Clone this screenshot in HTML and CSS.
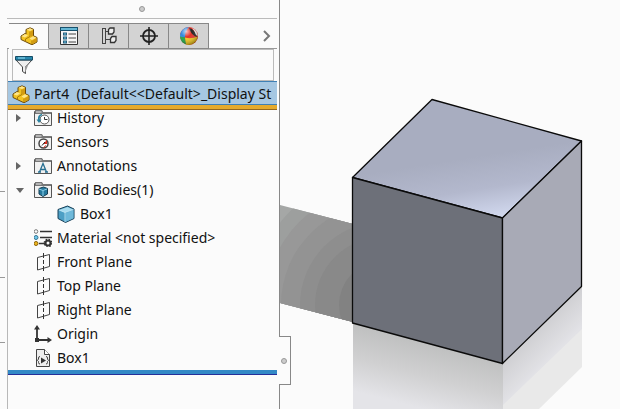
FILE: index.html
```html
<!DOCTYPE html>
<html lang="en">
<head>
<meta charset="utf-8">
<title>Part4</title>
<link rel="stylesheet" href="styles.css">
</head>
<body>
<svg class="defs" aria-hidden="true">
  <symbol id="part" viewBox="0 0 18 18">
    <path d="M1 9 5 6.500 6 7V2.500L10 .8l3.500 1.500v6.500L17 10.500v4.500l-5 2.800L1 12.500z" fill="#f3c321" stroke="#6b4a0c"/>
    <path d="M6.500 2.800 10 1.300l3 1.300-3 1.500zM1.500 9.200 5 7l3 1.500-3 2zM12 13l-2.500-1.500 3.500-2.200 3.500 1.500z" fill="#ffe58a"/>
    <path d="M10 4.500v5l-4.500 2.500v2.500M12 13.500v4" fill="none" stroke="#a97908"/>
    <path d="M12.500 13.500 16.500 11v3.800l-4 2.300zM10.500 4.500 13 3.300v5.500l-2.500 1.500z" fill="#d39b12"/>
  </symbol>
  <symbol id="folder" viewBox="0 0 18 18">
    <path d="M.5 16.500V2.500L1.500 1.500h6l1 2h9v13z" fill="#f1f1f1" stroke="#555"/>
    <path d="M1 5h16V3H9L8 1H2L1 2z" fill="#777"/>
    <path d="M2 3h5.500" stroke="#eee"/>
  </symbol>
  <symbol id="cube" viewBox="0 0 18 18">
    <path d="M1 4.500 10.500 1 17 4v9.500L8.500 17.500 1 13.500z" fill="#4d9fc5" stroke="#173f57"/>
    <path d="M2 5l8.500-3L16 4.500 8 7.500z" fill="#a8dcf0"/>
    <path d="M8.500 8 16.500 5v8.200l-8 3.700z" fill="#6fb9da"/>
    <path d="M8 7.500V17M2 5l6 2.500 8.500-3" fill="none" stroke="#d3f0fb" stroke-width=".7"/>
  </symbol>
  <symbol id="plane" viewBox="0 0 18 18">
    <path d="M3.500 4.500 15.500 1.500v12l-12 3.500z" fill="none" stroke="#444"/>
    <path d="M9.500 0v18" stroke="#333" stroke-dasharray="5 2 4 2"/>
  </symbol>
</svg>
<div class="app">
  <div class="gutter" aria-hidden="true"><i></i><i></i><i></i></div>
  <aside class="panel">
    <div class="grip"><span class="dot"></span></div>
    <div class="tabs" role="tablist">
      <button class="tab active" role="tab" aria-selected="true" aria-label="Design tree"><svg class="icon"><use href="#part"/></svg></button>
      <button class="tab" role="tab" aria-label="Properties">
        <svg class="icon" viewBox="0 0 18 18"><path d="M.5.500h17v17H.5z" fill="#f7f7f7" stroke="#333"/><path d="M0 0h18v4H0z" fill="#17516d"/><path d="M1 1h16v2H1z" fill="#65b7d5"/><path d="M3 5.500h4v3H3zM3 9.500h4v3H3zM3 13.500h4v3H3z" fill="#245d7a"/><path d="M4 7h2M4 11h2M4 15h2" stroke="#71c5e5"/><path d="M8.500 7H16M8.500 11H16M8.500 15H16" stroke="#444"/></svg>
      </button>
      <button class="tab" role="tab" aria-label="Configurations">
        <svg class="icon" viewBox="0 0 18 18"><path d="M2 1.500h4M2 16.500h4M5 4.500h4M5 12.500h5M2.500 1v16M5.500 1v16" stroke="#444" fill="none"/><path d="M8.500 2.500 10 1h4v4l-1.500 2h-4zM10.500 11.500 12 9.500h4v4l-1.500 2h-4z" fill="#eee" stroke="#333" stroke-width="1.300"/></svg>
      </button>
      <button class="tab" role="tab" aria-label="Dimensions">
        <svg class="icon" viewBox="0 0 18 18"><circle cx="9" cy="9" r="6" fill="none" stroke="#222" stroke-width="1.800"/><path d="M9 0v18M0 9h18" stroke="#222" stroke-width="1.600"/></svg>
      </button>
      <button class="tab" role="tab" aria-label="Display">
        <svg class="icon" viewBox="0 0 18 18"><defs><radialGradient id="shine" cx=".35" cy=".25" r=".75"><stop offset="0" stop-color="#fff" stop-opacity=".7"/><stop offset=".4" stop-color="#fff" stop-opacity="0"/><stop offset="1" stop-opacity=".35"/></radialGradient></defs><circle cx="9" cy="9" r="9" fill="#e33228"/><path d="M9 0A9 9 0 0 0 0 10l5 .5Q5 4 9 0z" fill="#3489dc"/><path d="M0 9.500 5 10.500 6.500 17.500A9 9 0 0 1 0 9.500z" fill="#20a545"/><path d="M5 10.500q6 2 12.500-1A9 9 0 0 1 6 17.500z" fill="#f3c91f"/><path d="M9 1q6 1 8 9-6-2-8-9z" fill="#272424"/><path d="M12 1q5 2 6 8l-2-1q-1-4-4-7z" fill="#eee"/><circle cx="9" cy="9" r="9" fill="url(#shine)"/></svg>
      </button>
      <button class="more" aria-label="More tabs"><svg viewBox="0 0 8 12"><path d="M1 1l5 5-5 5" fill="none" stroke="#777" stroke-width="2"/></svg></button>
    </div>
    <div class="body">
      <label class="filter">
        <svg class="icon" viewBox="0 0 18 18"><path d="M1 4 7.500 11v4.500l3 2V11L17 4z" fill="#eee" stroke="#444"/><path d="M10 11v6l4-10z" fill="#999"/><path d="M.5.500h17V4H.5z" fill="#2787ad" stroke="#174d66"/><path d="M3 2h7" stroke="#9be0f5"/></svg>
        <input type="text" aria-label="Filter tree">
      </label>
      <div class="root"><svg class="icon"><use href="#part"/></svg><span>Part4&nbsp; (Default&lt;&lt;Default&gt;_Display St</span></div>
      <ul class="tree">
        <li class="row"><span class="arrow closed"></span><svg class="icon" viewBox="0 0 18 18"><use href="#folder"/><circle cx="10.500" cy="10.500" r="4.500" fill="#fff" stroke="#555"/><path d="M10.500 8v2.500h3" fill="none" stroke="#333"/><path d="M8 5.500q-4 1-3 6" fill="none" stroke="#27809f" stroke-width="1.800"/><path d="M2.500 10.500h5L5 14z" fill="#27809f"/></svg>History</li>
        <li class="row"><span class="arrow"></span><svg class="icon" viewBox="0 0 18 18"><use href="#folder"/><circle cx="9.500" cy="10.500" r="4.500" fill="#fff" stroke="#444" stroke-width="1.500"/><path d="M9 11l4-4v4z" fill="#d72f20"/><path d="M8 12.500l3-3.500" stroke="#222"/><path d="M9.500 14.500l2.500-2" stroke="#d72f20"/></svg>Sensors</li>
        <li class="row"><span class="arrow closed"></span><svg class="icon" viewBox="0 0 18 18"><use href="#folder"/><path d="M5.500 15 9 6.500 12.500 15M6.500 12.500h5M4 15h3M11 15h3" fill="none" stroke="#276f91" stroke-width="1.300"/></svg>Annotations</li>
        <li class="row"><span class="arrow open"></span><svg class="icon" viewBox="0 0 18 18"><use href="#folder"/><path d="M5 7.500 9.500 6l4 1.500v5.500L9 15.500 5 13z" fill="#26799d" stroke="#153d52"/><path d="M5 8l4 1.500L13 8M9 9.500V15" fill="none" stroke="#8bd0ea"/></svg>Solid Bodies(1)</li>
        <li class="row child"><span class="arrow"></span><svg class="icon"><use href="#cube"/></svg>Box1</li>
        <li class="row"><span class="arrow"></span><svg class="icon" viewBox="0 0 18 18"><path d="M6 2.500h12M6 8.500h12M5 14.500h6" stroke="#333" stroke-width="1.600"/><circle cx="2" cy="2.500" r="1.800" fill="#fff" stroke="#777"/><circle cx="2" cy="8.500" r="2" fill="#70c8ed" stroke="#367591"/><circle cx="2" cy="14.500" r="2" fill="#edb51d" stroke="#89630c"/><circle cx="14" cy="14" r="2.500" fill="none" stroke="#333" stroke-width="2"/><circle cx="14" cy="14" r="3.800" fill="none" stroke="#333" stroke-width="1.200" stroke-dasharray="1.500"/></svg>Material &lt;not specified&gt;</li>
        <li class="row"><span class="arrow"></span><svg class="icon"><use href="#plane"/></svg>Front Plane</li>
        <li class="row"><span class="arrow"></span><svg class="icon"><use href="#plane"/></svg>Top Plane</li>
        <li class="row"><span class="arrow"></span><svg class="icon"><use href="#plane"/></svg>Right Plane</li>
        <li class="row"><span class="arrow"></span><svg class="icon" viewBox="0 0 18 18"><path d="M3 3v12h12" fill="none" stroke="#333" stroke-width="1.800"/><path d="M0 4.500 3 0l3 4.500zM13.500 12l4.500 3-4.500 3zM1 13h4v4H1z" fill="#333"/></svg>Origin</li>
        <li class="row"><span class="arrow"></span><svg class="icon" viewBox="0 0 18 18"><path d="M2.500.500h8l5 5v12h-13z" fill="#eee" stroke="#444"/><path d="M10.500.500v5h5" fill="#fff" stroke="#444"/><path d="M6 7.500q-1.500 0-1.500 1.500v1L3.500 11.500l1 1v1Q4.500 15 6 15M12 7.500q1.500 0 1.500 1.500v1l1 1.500-1 1v1q0 1.500-1.500 1.500" fill="none" stroke="#444"/><path d="M7 8.500l5 3-5 3z" fill="#333"/></svg>Box1</li>
      </ul>
      <div class="rollback"></div>
    </div>
  </aside>
  <main class="viewport">
    <svg class="scene" viewBox="280 0 340 409" preserveAspectRatio="xMinYMin meet" role="img" aria-label="Solid box model">
      <defs>
        <clipPath id="shadow"><path d="M280 205 353 224v98l-73-19z"/></clipPath>
        <linearGradient id="top" gradientUnits="userSpaceOnUse" x1="467" y1="158" x2="477" y2="222"><stop offset="0" stop-color="#a8adc0"/><stop offset=".5" stop-color="#b3b8cd"/><stop offset="1" stop-color="#d3daf0"/></linearGradient>
        <linearGradient id="front-reflection" gradientUnits="userSpaceOnUse" x1="424" y1="342" x2="408" y2="405"><stop offset="0" stop-color="#bfc0c0"/><stop offset=".5" stop-color="#d0d0d1"/><stop offset="1" stop-color="#e4e4e8"/></linearGradient>
        <linearGradient id="side-reflection" gradientUnits="userSpaceOnUse" x1="542" y1="325" x2="563" y2="346"><stop offset="0" stop-color="#d0d0d3"/><stop offset="1" stop-color="#e2e2e6"/></linearGradient>
      </defs>
      <g clip-path="url(#shadow)">
        <path d="M280 200h73v125h-73z" fill="#a5a7a6"/>
        <circle cx="383" cy="305" r="132" fill="#9d9f9e"/>
        <circle cx="383" cy="305" r="118" fill="#989898"/>
        <circle cx="383" cy="305" r="102" fill="#939393"/>
        <circle cx="383" cy="305" r="83" fill="#8e8e8e"/>
        <circle cx="383" cy="305" r="68" fill="#898989"/>
        <circle cx="383" cy="305" r="44" fill="#828282"/>
      </g>
      <path d="M353 323 503 364v45H353z" fill="url(#front-reflection)"/>
      <path d="M503 364 582 287v80l-43 42h-36z" fill="#e9e9e9"/>
      <path d="M503 364 582 287v42l-79 76z" fill="url(#side-reflection)"/>
      <g stroke="#0a0a0a" stroke-width="1.300" stroke-linejoin="round">
        <path d="M432 99.500 581.500 141 502.500 218 352.500 177.500z" fill="url(#top)"/>
        <path d="M352.500 177.500 502.500 218v145.500l-150-40.500z" fill="#6d7079"/>
        <path d="M502.500 218 581.500 141v145.500l-79 77z" fill="#a8aab6"/>
      </g>
    </svg>
    <button class="handle" aria-label="Collapse panel"><span class="dot"></span></button>
  </main>
</div>
</body>
</html>
```
FILE: styles.css
```css
* { box-sizing: border-box; }
body { margin: 0; background: #fbfbfb; color: #111; font: 14px/24px "Noto Sans", "Open Sans", sans-serif; }
button { padding: 0; border: 0; background: none; font: inherit; }
.defs { position: absolute; width: 0; height: 0; }
.app { display: grid; grid-template-columns: 7px 270px minmax(0, 1fr); min-height: 100vh; overflow: hidden; }
.gutter { display: grid; grid-template-rows: 192px 86px 65px; }
.gutter i { width: 5px; border-bottom: 1px solid #999; }
.icon { flex: none; width: 18px; height: 18px; }
.dot { width: 6px; height: 6px; border: 1px solid #999; border-radius: 50%; background: #ccc; }
.panel { display: flex; flex-direction: column; min-width: 0; }
.grip { display: flex; align-items: center; justify-content: center; height: 19px; border-bottom: 1px solid #bbb; }
.tabs { display: flex; height: 26px; margin-top: 4px; padding-left: 2px; border-bottom: 1px solid #999; }
.tab { display: flex; align-items: center; justify-content: center; width: 40px; height: 26px; border: 1px solid #888; border-left: 0; background: #d3d3d3; }
.tab.active { border-bottom-color: #fbfbfb; background: #fbfbfb; }
.more { display: flex; align-items: center; margin-left: auto; padding: 0 6px; }
.more svg { width: 8px; height: 12px; }
.body { flex: 1; border-left: 1px solid #b8b8b8; }
.filter { display: flex; align-items: center; height: 32px; margin: 0 3px 0 4px; padding-left: 2px; border: 1px solid #bbb; }
.filter input { flex: 1; min-width: 0; height: 24px; border: 0; outline: 0; background: transparent; font: inherit; }
.root { position: relative; z-index: 1; display: flex; align-items: center; gap: 4px; height: 29px; padding: 0 0 0 4px; overflow: hidden; border-top: 1px solid #3f80b5; border-bottom: 1px solid #98691c; background: linear-gradient(#a6c7e2 0 22px, #3f80b5 22px 23px, #e5aa2d 23px); white-space: nowrap; }
.root > * { margin-bottom: 4px; }
.tree { margin: -4px 0 0; padding: 0; list-style: none; }
.row { display: flex; align-items: center; height: 24px; padding-left: 8px; white-space: nowrap; }
.row .icon { margin-right: 5px; }
.child { padding-left: 31px; }
.arrow { display: flex; flex: none; width: 18px; }
.arrow.closed::before { content: ""; border: 4px solid transparent; border-right: 0; border-left: 5px solid #666; }
.arrow.open::before { content: ""; border: 4px solid transparent; border-bottom: 0; border-top: 5px solid #666; }
.rollback { height: 5px; border-bottom: 1px solid #252e99; background: #3389c6; }
.viewport { position: relative; min-width: 0; margin-left: 2px; border-left: 1px solid #888; }
.scene { display: block; width: 100%; }
.handle { position: absolute; top: 336px; left: -1px; display: flex; align-items: center; justify-content: center; width: 12px; height: 49px; padding-right: 2px; border: 1px solid #888; border-left: 0; background: #fbfbfb; }
```
